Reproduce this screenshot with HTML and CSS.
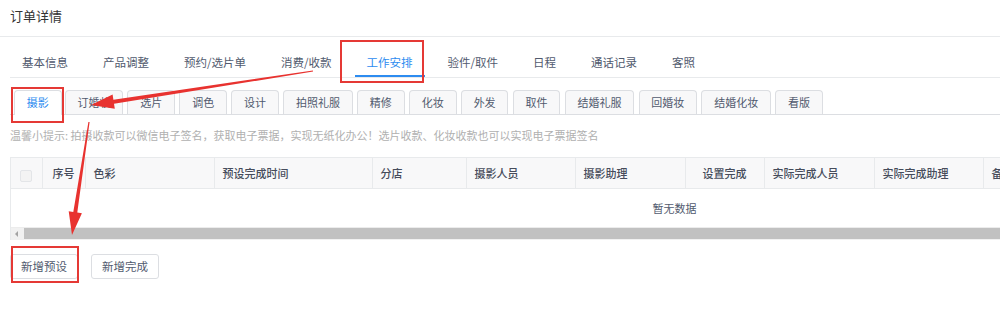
FILE: index.html
```html
<!DOCTYPE html>
<html lang="zh-CN">
<head>
<meta charset="utf-8">
<title>订单详情</title>
<link rel="stylesheet" href="styles.css">
</head>
<body>
<div class="page">
  <div class="title">订单详情</div>
  <div class="content">
    <nav class="tabs">
      <span class="tab">基本信息</span>
      <span class="tab">产品调整</span>
      <span class="tab">预约/选片单</span>
      <span class="tab">消费/收款</span>
      <span class="tab active">工作安排</span>
      <span class="tab">验件/取件</span>
      <span class="tab">日程</span>
      <span class="tab">通话记录</span>
      <span class="tab">客照</span>
    </nav>
    <div class="subtabs">
      <span class="stab active">摄影</span>
      <span class="stab">订婚妆</span>
      <span class="stab">选片</span>
      <span class="stab">调色</span>
      <span class="stab">设计</span>
      <span class="stab">拍照礼服</span>
      <span class="stab">精修</span>
      <span class="stab">化妆</span>
      <span class="stab">外发</span>
      <span class="stab">取件</span>
      <span class="stab">结婚礼服</span>
      <span class="stab">回婚妆</span>
      <span class="stab">结婚化妆</span>
      <span class="stab">看版</span>
    </div>
    <p class="tip">温馨小提示: 拍摄收款可以微信电子签名，获取电子票据，实现无纸化办公！选片收款、化妆收款也可以实现电子票据签名</p>
    <div class="table-wrap">
      <table class="grid">
        <thead>
          <tr>
            <th class="c-chk"><span class="checkbox"></span></th>
            <th class="c-idx">序号</th>
            <th class="c-color">色彩</th>
            <th class="c-time">预设完成时间</th>
            <th class="c-shop">分店</th>
            <th class="c-w1">摄影人员</th>
            <th class="c-w2">摄影助理</th>
            <th class="c-done">设置完成</th>
            <th class="c-w3">实际完成人员</th>
            <th class="c-w4">实际完成助理</th>
            <th class="c-note">备注</th>
            <th class="c-op">操作</th>
          </tr>
        </thead>
      </table>
      <div class="empty">暂无数据</div>
      <div class="hscroll"><span class="hs-btn"></span><span class="hs-thumb"></span></div>
    </div>
    <div class="actions">
      <button class="btn">新增预设</button>
      <button class="btn">新增完成</button>
    </div>
  </div>
  <svg class="annot" width="1000" height="311" viewBox="0 0 1000 311" aria-hidden="true">
    <rect x="341" y="41" width="82" height="41" fill="none" stroke="#e53935" stroke-width="2"/>
    <rect x="12" y="88" width="51" height="34" fill="none" stroke="#e53935" stroke-width="2"/>
    <rect x="12" y="247" width="66" height="35" fill="none" stroke="#e53935" stroke-width="2"/>
    <polygon fill="#e8322f" points="313.1,71.6 114,103.7 114.8,108.8 91,105 112.6,94.6 113.4,99.7 312.9,70.4"/>
    <polygon fill="#e8322f" points="89.6,122.1 77.3,212.5 81.9,213.2 72,235 68.7,211.2 73.3,211.9 88.4,121.9"/>
  </svg>
</div>
</body>
</html>
```

FILE: styles.css
```css
* { box-sizing: border-box; }
html, body { margin: 0; padding: 0; background: #fff; }
body {
  font-family: "Noto Sans CJK SC", "Noto Sans", sans-serif;
  font-size: 11px;
  color: #515a6e;
  overflow: hidden;
}
.page { position: relative; width: 1000px; height: 311px; overflow: hidden; }

.title {
  height: 37px;
  padding: 6px 0 0 10px;
  line-height: 20px;
  font-size: 13px;
  color: #333;
  border-bottom: 1px solid #e8eaec;
}

.content { padding-left: 10px; }

.tabs {
  display: flex;
  margin-top: 11px;
  height: 30px;
  border-bottom: 1px solid #e8eaec;
  white-space: nowrap;
}
.tab {
  position: relative;
  padding: 0 12px;
  margin-right: 11px;
  line-height: 29px;
  font-size: 11.5px;
  color: #515a6e;
}
.tab.active { color: #2d8cf0; }
.tab.active::after {
  content: "";
  position: absolute;
  left: 0; right: 0; bottom: 0;
  height: 2px;
  background: #2d8cf0;
}

.subtabs {
  display: flex;
  margin-top: 12px;
  height: 25px;
  border-bottom: 1px solid #dcdee2;
  white-space: nowrap;
}
.stab {
  position: relative;
  height: 24px;
  padding: 0 11.8px;
  margin-right: 4.3px;
  line-height: 23px;
  border: 1px solid #dcdee2;
  border-bottom: 0;
  border-radius: 4px 4px 0 0;
  background: #f8f8f9;
  color: #515a6e;
}
.stab:first-child { margin-left: 4px; margin-right: 3px; }
.stab.active { background: #fff; color: #2d8cf0; }
.stab.active::after {
  content: "";
  position: absolute;
  left: 0; right: 0; bottom: -1px;
  height: 1px;
  background: #fff;
}

.tip {
  margin: 11px 0 13px;
  line-height: 18px;
  color: #b0b0b0;
  white-space: nowrap;
}

.table-wrap {
  width: 1328px;
  border-top: 1px solid #e8eaec;
  border-left: 1px solid #e8eaec;
}
.grid {
  border-collapse: collapse;
  table-layout: fixed;
  width: 1327px;
}
.grid th {
  height: 30px;
  padding: 0 8px;
  background: #f8f8f9;
  border-right: 1px solid #e8eaec;
  border-bottom: 1px solid #e8eaec;
  text-align: left;
  font-weight: 500;
  color: #464c5b;
  white-space: nowrap;
  overflow: hidden;
}
.c-chk { width: 31px; }
.c-idx { width: 43px; }
.c-color { width: 129px; }
.c-time { width: 158px; }
.c-shop { width: 94px; }
.c-w1 { width: 109px; }
.c-w2 { width: 110px; }
.c-done { width: 79px; }
.c-w3 { width: 110px; }
.c-w4 { width: 109px; }
.c-note { width: 150px; }
.c-op { width: 205px; }
.grid th.c-idx, .grid th.c-done, .grid th.c-chk { text-align: center; }
.checkbox {
  display: inline-block;
  width: 12px;
  height: 12px;
  margin-top: 3px;
  border: 1px solid #e3e5e8;
  border-radius: 2px;
  background: #f3f3f3;
  vertical-align: middle;
}

.empty {
  height: 38px;
  line-height: 38px;
  text-align: center;
  color: #515a6e;
}
.hscroll {
  display: flex;
  align-items: center;
  height: 13px;
  background: #f1f1f1;
  border-top: 1px solid #ececec;
}
.hs-btn {
  position: relative;
  width: 13px;
  height: 12px;
}
.hs-btn::before {
  content: "";
  position: absolute;
  left: 4px; top: 3px;
  border-style: solid;
  border-width: 3px 3px 3px 0;
  border-color: transparent #a3a3a3 transparent transparent;
}
.hs-thumb {
  flex: 1;
  height: 11px;
  background: #c1c1c1;
}

.actions {
  display: flex;
  gap: 13px;
  margin-top: 14px;
}
.btn {
  width: 68px;
  height: 25px;
  padding: 0;
  border: 1px solid #dcdee2;
  border-radius: 3px;
  background: #fff;
  font-family: inherit;
  font-size: 11.5px;
  color: #515a6e;
}

.annot {
  position: absolute;
  left: 0; top: 0;
  pointer-events: none;
}
```
